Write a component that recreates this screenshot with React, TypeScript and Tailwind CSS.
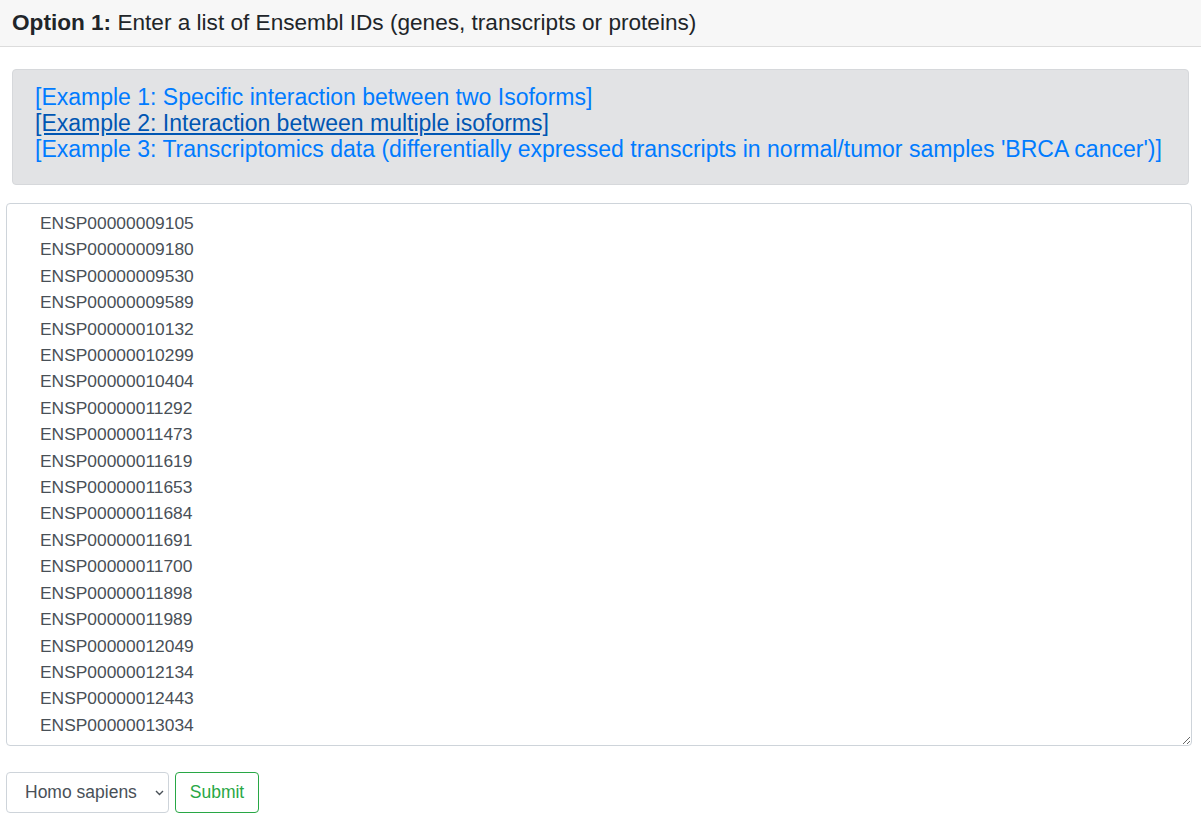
import React from "react";

const ids = [
  "ENSP00000009105","ENSP00000009180","ENSP00000009530","ENSP00000009589","ENSP00000010132",
  "ENSP00000010299","ENSP00000010404","ENSP00000011292","ENSP00000011473","ENSP00000011619",
  "ENSP00000011653","ENSP00000011684","ENSP00000011691","ENSP00000011700","ENSP00000011898",
  "ENSP00000011989","ENSP00000012049","ENSP00000012134","ENSP00000012443","ENSP00000013034",
  "ENSP00000013070","ENSP00000013125","ENSP00000013807",
];

export default function App() {
  const font = { fontFamily: '"Liberation Sans", Arial, Helvetica, sans-serif' };
  return (
    <div className="w-[1201px] h-[826px] bg-white overflow-hidden" style={font}>
      <div className="h-[47px] bg-[#f7f7f7] border-b border-[#dcdcdc] flex items-center pl-[12px] text-[22.6px] text-[#212529]">
        <span className="font-bold">Option 1:</span>&nbsp;Enter a list of Ensembl IDs (genes, transcripts or proteins)
      </div>
      <div className="px-[12px] pt-[22px]">
        <div className="bg-[#e2e3e5] border border-[#d6d8db] rounded-[4px] h-[116px] pl-[22px] pt-[14px] text-[23px] leading-[26px]">
          <div><a className="text-[#007bff] cursor-pointer">[Example 1: Specific interaction between two Isoforms]</a></div>
          <div><a className="text-[#0056b3] underline cursor-pointer">[Example 2: Interaction between multiple isoforms]</a></div>
          <div><a className="text-[#007bff] cursor-pointer">[Example 3: Transcriptomics data (differentially expressed transcripts in normal/tumor samples 'BRCA cancer')]</a></div>
        </div>
      </div>
      <div className="px-[6px] pt-[18px]">
        <textarea
          readOnly
          className="block w-[1186px] h-[543px] border border-[#ced4da] rounded-[4px] pl-[33px] pt-[6px] text-[17.4px] leading-[26.4px] text-[#495057] resize-y outline-none overflow-hidden"
          style={font}
          value={ids.join("\n")}
        />
      </div>
      <div className="flex gap-[6px] px-[6px] pt-[26px]">
        <div className="relative w-[163px] h-[41px] border border-[#ced4da] rounded-[4px] flex items-center pl-[18px] text-[17.5px] text-[#495057]">
          Homo sapiens
          <svg className="absolute right-[4px] top-[17px]" width="9" height="6" viewBox="0 0 9 6">
            <path d="M1 1l3.5 3.5L8 1" fill="none" stroke="#495057" strokeWidth="1.4" />
          </svg>
        </div>
        <button className="w-[84px] h-[41px] border border-[#28a745] rounded-[4px] text-[#28a745] text-[17.5px]" style={font}>
          Submit
        </button>
      </div>
    </div>
  );
}
